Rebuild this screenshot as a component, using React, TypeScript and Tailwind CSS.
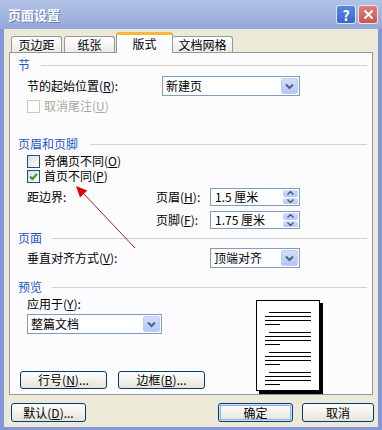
import React from "react";

const Key = ({ k }: { k: string }) => (
  <span>
    (<u>{k}</u>)
  </span>
);

const Header = ({ text, gap }: { text: string; gap: string }) => (
  <div className="flex items-center h-[14px] ml-[8px] mr-[5px]">
    <span className="text-[#1d54c4]">{text}</span>
    <div className={`flex-1 h-px bg-[#d3d2c6] ${gap}`} />
  </div>
);

const Check = ({ checked, disabled, children }: { checked?: boolean; disabled?: boolean; children: React.ReactNode }) => (
  <div className={`flex items-center h-[14px] ml-[17px] gap-[4px] ${disabled ? "text-[#aca899]" : ""}`}>
    <span
      className={`w-[13px] h-[13px] flex items-center justify-center border ${
        disabled ? "border-[#cac8bb] bg-white" : "border-[#1c5180] bg-linear-to-br from-[#dcdcd7] to-white"
      }`}
    >
      {checked && (
        <svg width="11" height="11" viewBox="0 0 11 11">
          <path d="M2 5.5l2.5 2.5L9 3" fill="none" stroke="#21a121" strokeWidth="2" />
        </svg>
      )}
    </span>
    <span>{children}</span>
  </div>
);

const Select = ({ text, className }: { text: string; className: string }) => (
  <div className={`h-[20px] border border-[#7f9db9] bg-white flex items-center ${className}`}>
    <span className="flex-1 pl-[3px]">{text}</span>
    <span className="w-[17px] h-[16px] mr-px rounded-[2px] border border-[#bccdf6] bg-linear-to-b from-[#d2defd] to-[#b4c8f6] flex items-center justify-center">
      <svg width="9" height="7" viewBox="0 0 9 7">
        <path d="M1 1.5l3.5 3.5L8 1.5" fill="none" stroke="#4d6185" strokeWidth="2" />
      </svg>
    </span>
  </div>
);

const Spin = ({ text }: { text: string }) => (
  <div className="h-[18px] w-[90px] border border-[#7f9db9] bg-white flex items-center">
    <span className="flex-1 pl-[4px]">{text}</span>
    <span className="w-[16px] h-[16px] flex flex-col gap-px py-px pr-px">
      <span className="flex-1 rounded-[2px] bg-linear-to-b from-[#d2defd] to-[#b4c8f6] flex items-center justify-center">
        <svg width="7" height="4" viewBox="0 0 7 4">
          <path d="M0.5 3.5l3-3 3 3" fill="none" stroke="#4d6185" strokeWidth="1.5" />
        </svg>
      </span>
      <span className="flex-1 rounded-[2px] bg-linear-to-b from-[#d2defd] to-[#b4c8f6] flex items-center justify-center">
        <svg width="7" height="4" viewBox="0 0 7 4">
          <path d="M0.5 0.5l3 3 3-3" fill="none" stroke="#4d6185" strokeWidth="1.5" />
        </svg>
      </span>
    </span>
  </div>
);

const Btn = ({ children, className, primary }: { children: React.ReactNode; className: string; primary?: boolean }) => (
  <div
    className={`flex items-center justify-center rounded-[3px] border border-[#003c74] bg-linear-to-b from-white to-[#e6e3d8] ${
      primary ? "shadow-[inset_0_0_0_1px_#cee0fb,inset_0_0_0_2px_#8fb1e8]" : ""
    } ${className}`}
  >
    {children}
  </div>
);

const Preview = () => (
  <svg width="68" height="95" viewBox="0 0 68 95">
    <rect x="3" y="3" width="64" height="91" fill="#000" />
    <rect x="0.5" y="0.5" width="63" height="90" fill="#fff" stroke="#000" />
    {[12, 32, 52, 72].map((y) => (
      <g key={y} stroke="#000" strokeWidth="1">
        <line x1="13" x2="55" y1={y + 0.5} y2={y + 0.5} />
        <line x1="9" x2="55" y1={y + 4.5} y2={y + 4.5} />
        <line x1="9" x2="55" y1={y + 8.5} y2={y + 8.5} />
        <line x1="9" x2="24" y1={y + 12.5} y2={y + 12.5} />
      </g>
    ))}
  </svg>
);

export default function App() {
  return (
    <div className="relative w-[382px] h-[430px] bg-[#8296da] flex flex-col text-[12px] leading-[14px] text-black font-['Noto_Sans_CJK_SC','Noto_Sans',sans-serif]">
      {/* title bar */}
      <div className="h-[29px] flex items-center bg-linear-to-b from-[#b3c2e4] to-[#94a9d8] pl-[8px] pr-[4px]">
        <span className="flex-1 text-white font-bold text-[13px] [text-shadow:1px_1px_0_#6a7fb8]">页面设置</span>
        <div className="flex gap-[2px]">
          <span className="w-[20px] h-[19px] rounded-[3px] border border-white/80 bg-linear-to-b from-[#5a86e0] to-[#3a66cc] flex items-center justify-center text-white font-bold text-[14px]">
            ?
          </span>
          <span className="w-[20px] h-[19px] rounded-[3px] border border-white/80 bg-linear-to-b from-[#d88078] to-[#c45c54] flex items-center justify-center">
            <svg width="11" height="11" viewBox="0 0 11 11">
              <path d="M1.5 1.5l8 8M9.5 1.5l-8 8" stroke="#fff" strokeWidth="2" />
            </svg>
          </span>
        </div>
      </div>

      {/* body */}
      <div className="flex-1 mx-[4px] mb-[3px] bg-[#ece9d8] flex flex-col">
        {/* tabs */}
        <div className="h-[23px] flex items-end pl-[7px]">
          <div className="w-[51px] h-[16px] border border-b-0 border-[#919b9c] rounded-t-[3px] bg-linear-to-b from-white to-[#ecebe5] flex items-center justify-center">
            页边距
          </div>
          <div className="ml-[2px] w-[51px] h-[16px] border border-b-0 border-[#919b9c] rounded-t-[3px] bg-linear-to-b from-white to-[#ecebe5] flex items-center justify-center">
            纸张
          </div>
          <div className="relative z-10 -mb-px ml-px w-[57px] h-[21px] border border-b-0 border-[#919b9c] border-t-[3px] border-t-[#f5b83c] rounded-t-[3px] bg-[#fcfcfe] flex items-center justify-center">
            版式
          </div>
          <div className="w-[60px] h-[16px] border border-b-0 border-l-0 border-[#919b9c] rounded-t-[3px] bg-linear-to-b from-white to-[#ecebe5] flex items-center justify-center">
            文档网格
          </div>
        </div>

        {/* panel */}
        <div className="mx-[5px] h-[343px] border border-[#919b9c] bg-[#fcfcfe] pt-[5px] flex flex-col">
          <Header text="节" gap="ml-[11px]" />
          <div className="mt-[4px] h-[20px] flex items-center ml-[17px]">
            <span className="w-[135px]">
              节的起始位置<Key k="R" />:
            </span>
            <Select text="新建页" className="w-[138px]" />
          </div>
          <div className="mt-[3px]">
            <Check disabled>
              取消尾注<Key k="U" />
            </Check>
          </div>

          <div className="mt-[24px]">
            <Header text="页眉和页脚" gap="ml-[12px]" />
          </div>
          <div className="mt-[3px]">
            <Check>
              奇偶页不同<Key k="O" />
            </Check>
          </div>
          <div className="mt-px">
            <Check checked>
              首页不同<Key k="P" />
            </Check>
          </div>
          <div className="mt-[5px] h-[18px] flex items-center ml-[17px]">
            <span className="w-[129px]">距边界:</span>
            <span className="w-[54px]">
              页眉<Key k="H" />:
            </span>
            <Spin text="1.5 厘米" />
          </div>
          <div className="mt-[5px] h-[18px] flex items-center ml-[17px]">
            <span className="w-[129px]" />
            <span className="w-[54px]">
              页脚<Key k="F" />:
            </span>
            <Spin text="1.75 厘米" />
          </div>

          <div className="mt-[2px]">
            <Header text="页面" gap="ml-[10px]" />
          </div>
          <div className="mt-[3px] h-[20px] flex items-center ml-[17px]">
            <span className="w-[183px]">
              垂直对齐方式<Key k="V" />:
            </span>
            <Select text="顶端对齐" className="w-[90px]" />
          </div>

          <div className="mt-[12px]">
            <Header text="预览" gap="ml-[10px]" />
          </div>
          <div className="flex">
            <div className="w-[246px] flex flex-col">
              <div className="mt-[3px] h-[14px] ml-[17px]">
                应用于<Key k="Y" />:
              </div>
              <Select text="整篇文档" className="mt-[3px] ml-[17px] w-[135px]" />
              <div className="mt-[37px] ml-[10px] flex gap-[11px]">
                <Btn className="w-[87px] h-[18px]">
                  行号<Key k="N" />...
                </Btn>
                <Btn className="w-[87px] h-[18px]">
                  边框<Key k="B" />...
                </Btn>
              </div>
            </div>
            <div className="mt-[6px]">
              <Preview />
            </div>
          </div>
        </div>

        {/* bottom buttons */}
        <div className="mt-[8px] flex pl-[7px] pr-[4px]">
          <Btn className="w-[75px] h-[19px]">
            默认<Key k="D" />...
          </Btn>
          <div className="flex-1" />
          <Btn primary className="w-[75px] h-[19px]">
            确定
          </Btn>
          <Btn className="ml-[9px] w-[72px] h-[19px]">取消</Btn>
        </div>
      </div>

      {/* red annotation arrow */}
      <svg className="absolute inset-0 pointer-events-none" width="382" height="430">
        <line x1="135" y1="248" x2="83" y2="193" stroke="#a82020" strokeWidth="1" />
        <polygon points="76,186 87.2,190.6 80,197.4" fill="#e00000" />
      </svg>
    </div>
  );
}
